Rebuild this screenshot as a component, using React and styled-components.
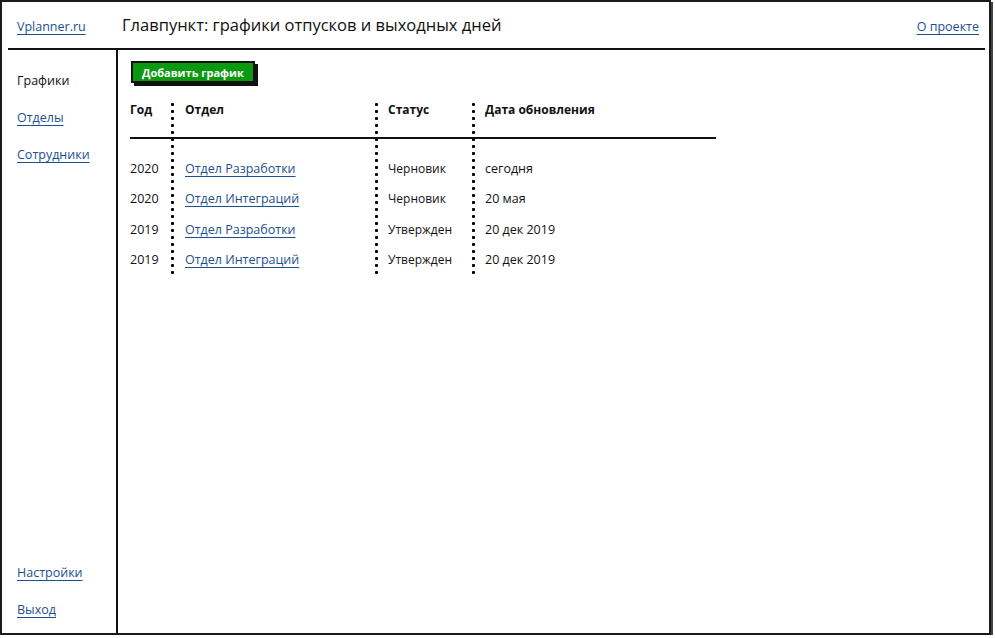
import React from 'react';
import styled, {createGlobalStyle} from 'styled-components';

const GlobalStyle = createGlobalStyle`
body {
  margin: 0;
  background: #fff;
  font-family: "Open Sans", "Noto Sans", sans-serif;
  color: #111;
}
`;

const Frame = styled.div`
box-sizing: border-box;
width: 991px;
height: 635px;
border: 2px solid #1a1a1a;
box-shadow: 2px 2px 0 #444;
display: flex;
flex-direction: column;
background: #fff;
`;

const Header = styled.header`
display: flex;
align-items: center;
height: 46px;
margin: 0 4px 0 6px;
border-bottom: 2px solid #111;
`;

const Logo = styled.div`
box-sizing: border-box;
width: 114px;
padding-left: 9px;
`;

const Link = styled.a`
color: #1d4f91;
text-decoration: underline;
text-underline-offset: 3px;
font-size: ${p => p.$size || 12.5}px;
cursor: pointer;
`;

const Title = styled.h1`
flex: 1;
margin: 0 0 2px;
font-size: 16.5px;
font-weight: 400;
color: #111;
`;

const Right = styled.div`
padding-right: 6px;
`;

const Body = styled.div`
flex: 1;
display: flex;
`;

const Sidebar = styled.nav`
box-sizing: border-box;
width: 116px;
border-right: 2px solid #111;
display: flex;
flex-direction: column;
padding: 12px 0 5px 15px;
`;

const NavItem = styled.div`
height: 37px;
line-height: 37px;
font-size: 12.5px;
color: #111;
`;

const Spacer = styled.div`
flex: 1;
`;

const Content = styled.main`
flex: 1;
padding: 11px 0 0 12px;
`;

const Button = styled.button`
display: block;
height: 22px;
padding: 0 9px;
margin-left: 1px;
background: #0a9a10;
color: #fff;
border: 2px solid #111;
box-shadow: 3px 3px 0 #111;
font-family: inherit;
font-size: 11px;
font-weight: 700;
cursor: pointer;
`;

const Table = styled.div`
display: flex;
width: 586px;
margin-top: 18px;
`;

const Column = styled.div`
width: ${p => p.$width}px;
padding-left: ${p => p.$pad || 0}px;
box-sizing: border-box;
background: ${p => (p.$pad
    ? 'radial-gradient(circle at 1.5px 3.5px, #000 1.3px, transparent 1.8px) left top / 4px 7px repeat-y'
    : 'none')};
`;

const Head = styled.div`
height: 36px;
margin-left: ${p => -(p.$pad || 0)}px;
padding-left: ${p => p.$pad || 0}px;
border-bottom: 2px solid #111;
font-size: 12px;
font-weight: 700;
line-height: 18px;
margin-bottom: 15px;
`;

const Cell = styled.div`
height: 30.3px;
line-height: 30px;
font-size: ${p => (p.$small ? 12 : 12.5)}px;
white-space: nowrap;
`;

const rows = [
    {year: 2020, dept: 'Отдел Разработки', status: 'Черновик', date: 'сегодня'},
    {year: 2020, dept: 'Отдел Интеграций', status: 'Черновик', date: '20 мая'},
    {year: 2019, dept: 'Отдел Разработки', status: 'Утвержден', date: '20 дек 2019'},
    {year: 2019, dept: 'Отдел Интеграций', status: 'Утвержден', date: '20 дек 2019'},
];

function App() {
    return <>
        <GlobalStyle/>
        <Frame>
            <Header>
                <Logo><Link $size={12.5}>Vplanner.ru</Link></Logo>
                <Title>Главпункт: графики отпусков и выходных дней</Title>
                <Right><Link>О проекте</Link></Right>
            </Header>
            <Body>
                <Sidebar>
                    <NavItem>Графики</NavItem>
                    <NavItem><Link>Отделы</Link></NavItem>
                    <NavItem><Link>Сотрудники</Link></NavItem>
                    <Spacer/>
                    <NavItem><Link>Настройки</Link></NavItem>
                    <NavItem><Link>Выход</Link></NavItem>
                </Sidebar>
                <Content>
                    <Button>Добавить график</Button>
                    <Table>
                        <Column $width={41}>
                            <Head>Год</Head>
                            {rows.map((r, i) => <Cell key={i}>{r.year}</Cell>)}
                        </Column>
                        <Column $width={204} $pad={14}>
                            <Head $pad={14}>Отдел</Head>
                            {rows.map((r, i) => <Cell key={i}><Link>{r.dept}</Link></Cell>)}
                        </Column>
                        <Column $width={97} $pad={13}>
                            <Head $pad={13}>Статус</Head>
                            {rows.map((r, i) => <Cell key={i} $small>{r.status}</Cell>)}
                        </Column>
                        <Column $width={244} $pad={13}>
                            <Head $pad={13}>Дата обновления</Head>
                            {rows.map((r, i) => <Cell key={i}>{r.date}</Cell>)}
                        </Column>
                    </Table>
                </Content>
            </Body>
        </Frame>
    </>;
}

export default App;
